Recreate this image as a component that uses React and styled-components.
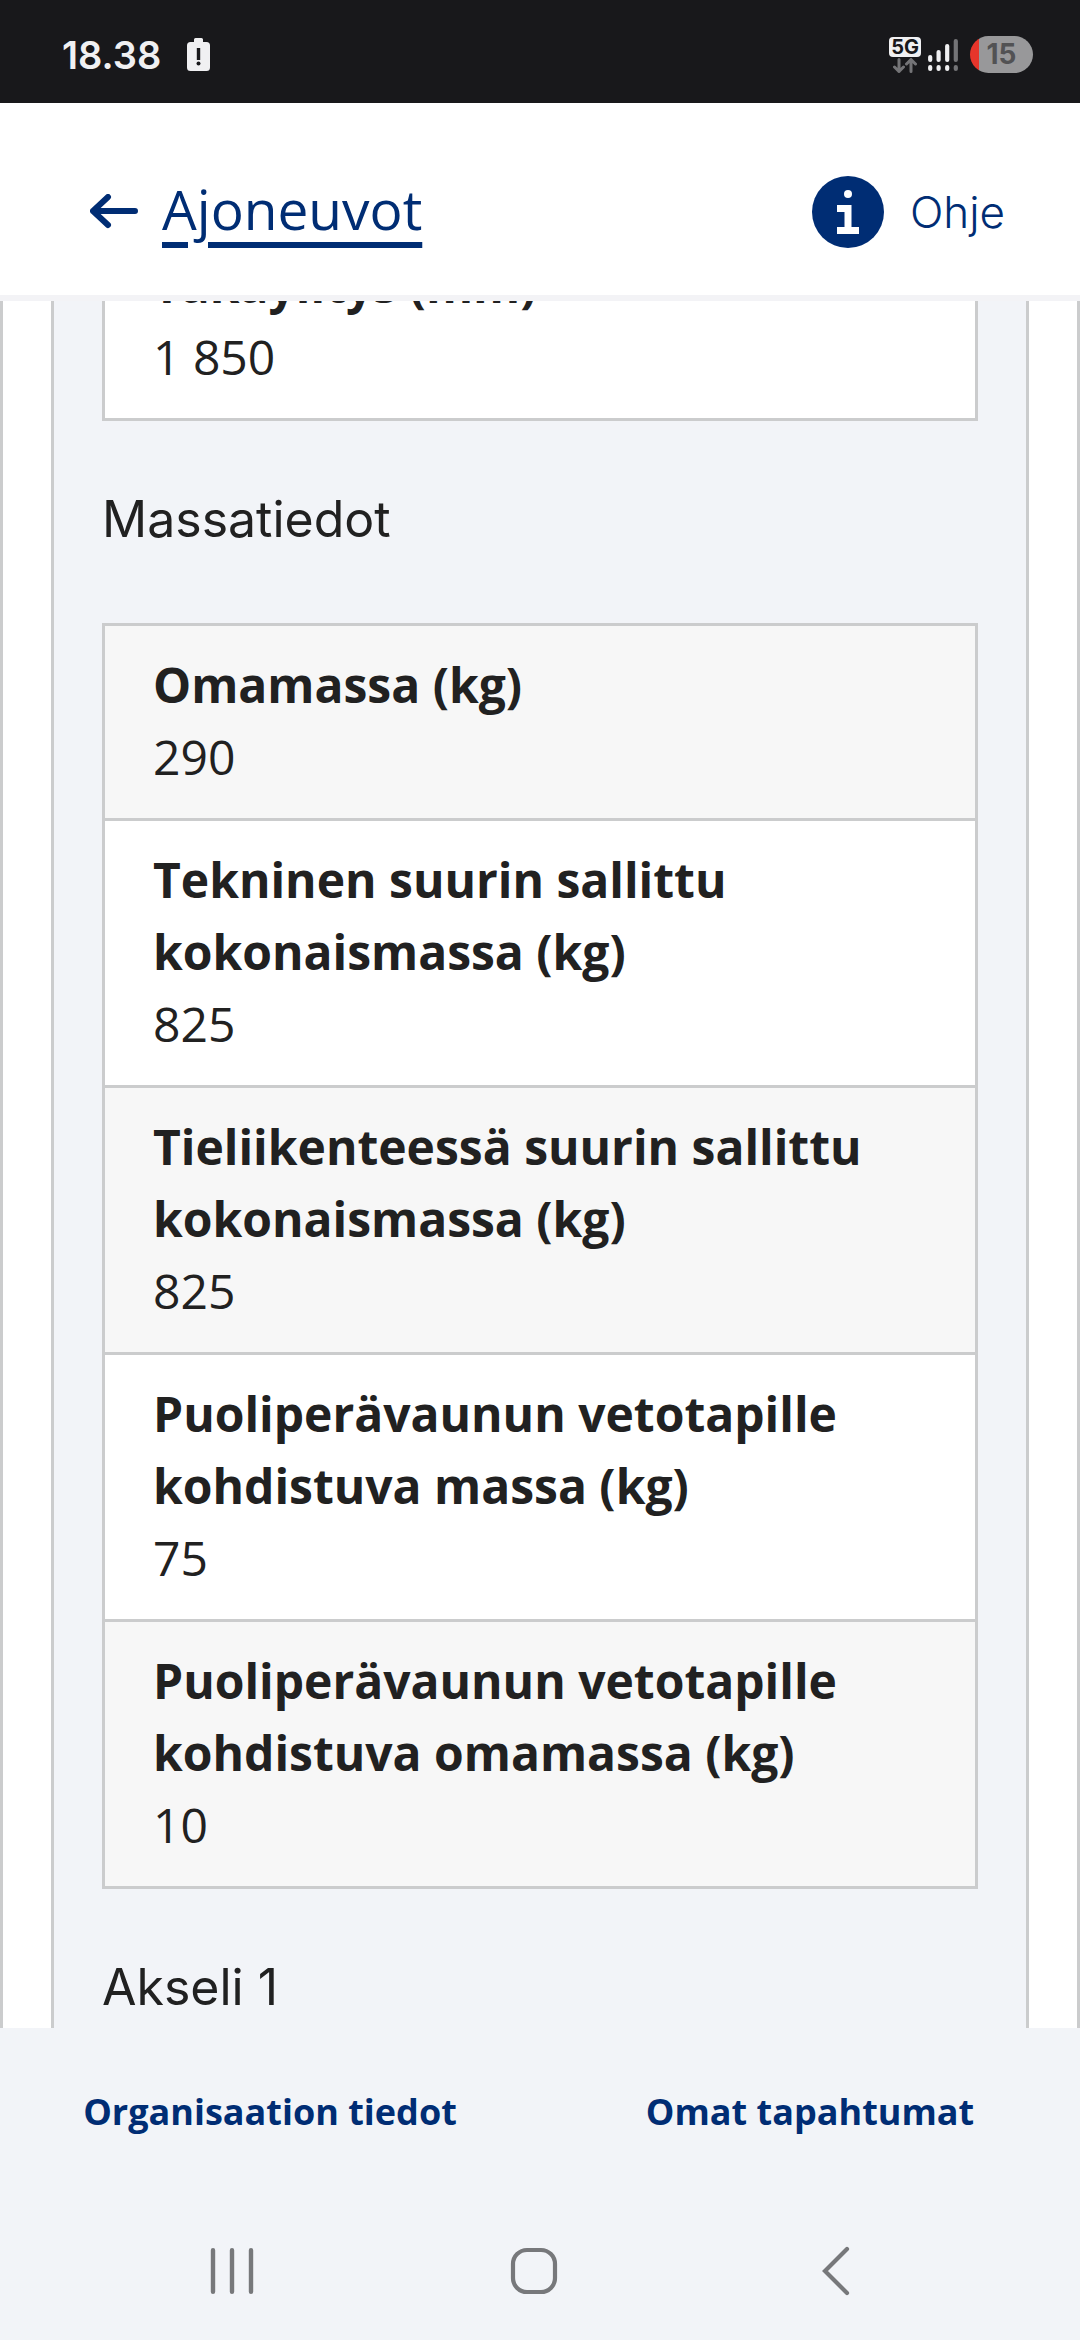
import React, { useLayoutEffect, useRef } from 'react';
import styled, { createGlobalStyle } from 'styled-components';

const navy = '#002d74';
const line = '#cbcccd';
const panel = '#f2f4f8';

const GlobalStyle = createGlobalStyle`
*, *::before, *::after { box-sizing: border-box; }
body {
    margin: 0;
    background: ${panel};
    color: #212121;
    font-family: 'Open Sans', sans-serif;
    font-size: 48px;
    line-height: 72px;
}
`;

const Screen = styled.div`
display: flex;
flex-direction: column;
height: 100vh;
`;

const StatusBar = styled.div`
display: flex;
flex: none;
align-items: center;
gap: 26px;
padding: 6px 47px 0 62px;
height: 103px;
background: #18181b;
color: #f0f0f2;
font-family: 'Inter', sans-serif;
`;

const Clock = styled.span`
font-size: 38px;
font-weight: 600;
line-height: 48px;
`;

const StatusIcons = styled.div`
display: flex;
align-items: center;
gap: 7px;
margin-left: auto;
`;

const Network = styled.div`
display: flex;
flex-direction: column;
align-items: center;
gap: 1px;
`;

const NetworkBadge = styled.span`
padding: 0 2px;
border-radius: 4px;
background: #f0f0f2;
color: #18181b;
font-size: 20px;
font-weight: 700;
line-height: 20px;
`;

const Signal = styled.svg`
margin-right: 5px;
`;

const BatteryPill = styled.span`
width: 63px;
height: 37px;
border-radius: 19px;
background: linear-gradient(to right, #e6352b 9px, #98989a 9px);
color: #525254;
font-size: 28px;
font-weight: 700;
line-height: 37px;
text-align: center;
`;

const Header = styled.header`
display: flex;
flex: none;
align-items: center;
justify-content: space-between;
height: 198px;
padding: 26px 75px 0 90px;
border-bottom: 6px solid #f3f3f6;
background: #fff;
color: ${navy};
`;

const BackLink = styled.a`
display: flex;
align-items: center;
gap: 24px;
color: inherit;
text-decoration: none;
`;

const BackText = styled.span`
padding-bottom: 6px;
font-size: 55px;
text-decoration: underline;
text-decoration-thickness: 6px;
text-underline-offset: 12px;
`;

const HelpButton = styled.button`
display: flex;
align-items: center;
gap: 26px;
padding: 0;
border: 0;
background: none;
color: inherit;
font-family: 'Inter', sans-serif;
font-size: 44px;
font-weight: 300;
line-height: 72px;
`;

const Scroller = styled.main`
flex: 1;
min-height: 0;
overflow-y: auto;
scrollbar-width: none;
border: 0 solid ${line};
border-width: 0 3px;
padding: 0 48px;
background: #fff;
`;

const Panel = styled.div`
border: 0 solid ${line};
border-width: 0 3px;
padding: 0 48px 200px;
background: ${panel};
`;

const SectionTitle = styled.h2`
margin: 62px 0 68px;
font-family: 'Inter', sans-serif;
font-size: 50px;
font-weight: 400;
line-height: 72px;
`;

const DataList = styled.dl`
margin: 0;
border: 3px solid ${line};
`;

const DataRow = styled.div`
padding: 23px 48px 25px;
background: ${props => (props.$shaded ? '#f7f7f7' : '#fff')};

& + & {
    border-top: 3px solid ${line};
}
`;

const Term = styled.dt`
font-weight: 700;
`;

const Value = styled.dd`
margin: 0;
`;

const LinkBar = styled.nav`
display: grid;
flex: none;
grid-template-columns: 1fr 1fr;
height: 172px;
padding-top: 57px;
background: ${panel};
`;

const BarLink = styled.a`
color: ${navy};
font-size: 36px;
font-weight: 700;
line-height: 54px;
text-align: center;
text-decoration: none;
`;

const SystemNav = styled.div`
display: grid;
flex: none;
grid-template-columns: repeat(3, 1fr);
height: 140px;
padding: 0 93px 0 81px;
background: ${panel};
`;

const NavButton = styled.button`
display: flex;
align-items: center;
justify-content: center;
padding: 2px 0 0;
border: 0;
background: none;
color: #77787b;
`;

const dimensions = [
    { label: 'Takaylitys (mm)', value: '1 850' },
];

const masses = [
    { label: 'Omamassa (kg)', value: '290' },
    { label: 'Tekninen suurin sallittu kokonaismassa (kg)', value: '825' },
    { label: 'Tieliikenteessä suurin sallittu kokonaismassa (kg)', value: '825' },
    { label: 'Puoliperävaunun vetotapille kohdistuva massa (kg)', value: '75' },
    { label: 'Puoliperävaunun vetotapille kohdistuva omamassa (kg)', value: '10' },
];

const BatteryAlert = () => (
    <svg width="23" height="33" viewBox="0 0 23 33" aria-hidden="true">
        <path d="M7 1.5Q7 0 8.500 0h6Q16 0 16 1.500V4h3.500Q23 4 23 7.500v22Q23 33 19.500 33h-16Q0 33 0 29.500v-22Q0 4 3.500 4H7z" fill="#f0f0f2" />
        <path d="M9.800 10h3.400v12H9.800z" fill="#18181b" />
        <circle cx="11.500" cy="25.500" r="2" fill="#18181b" />
    </svg>
);

const DataArrows = () => (
    <svg width="24" height="15" viewBox="0 0 24 15" fill="none" stroke="#747477" strokeWidth="3" strokeLinecap="round" strokeLinejoin="round" aria-hidden="true">
        <path d="M6 1.500v12M1.500 9 6 13.500 10.500 9M18 13.500v-12M13.500 6 18 1.500 22.500 6" />
    </svg>
);

const SignalBars = () => (
    <Signal width="30" height="34" viewBox="0 0 30 34" strokeWidth="4.200" strokeLinecap="round" aria-hidden="true">
        <path d="M2.200 19v3M10.600 14v8M19.200 8v14M2.200 29v2M10.600 29v2M19.200 29v2" stroke="#f0f0f2" />
        <path d="M27.800 3v19M27.800 29v2" stroke="#747477" />
    </Signal>
);

const BackArrow = () => (
    <svg width="48" height="36" viewBox="0 0 48 36" fill="none" stroke="currentColor" strokeWidth="6" strokeLinecap="round" strokeLinejoin="round" aria-hidden="true">
        <path d="M45 17H3M18 3 3 17 18 31" />
    </svg>
);

const InfoIcon = () => (
    <svg width="72" height="72" viewBox="0 0 72 72" aria-hidden="true">
        <circle cx="36" cy="36" r="36" fill={navy} />
        <circle cx="36" cy="18" r="4" fill="#fff" />
        <path d="M25 29h14.500v22H47v7H25v-7h7.500V36H25z" fill="#fff" />
    </svg>
);

const DataTable = ({ rows, startShaded }) => (
    <DataList>
        {rows.map((row, i) => (
            <DataRow key={row.label} $shaded={startShaded ? i % 2 === 0 : i % 2 === 1}>
                <Term>{row.label}</Term>
                <Value>{row.value}</Value>
            </DataRow>
        ))}
    </DataList>
);

const App = () => {
    const scroller = useRef(null);

    useLayoutEffect(() => {
        scroller.current.scrollTop = 78;
    }, []);

    return (
        <Screen>
            <GlobalStyle />
            <StatusBar>
                <Clock>18.38</Clock>
                <BatteryAlert />
                <StatusIcons>
                    <Network>
                        <NetworkBadge>5G</NetworkBadge>
                        <DataArrows />
                    </Network>
                    <SignalBars />
                    <BatteryPill>15</BatteryPill>
                </StatusIcons>
            </StatusBar>

            <Header>
                <BackLink href="#ajoneuvot">
                    <BackArrow />
                    <BackText>Ajoneuvot</BackText>
                </BackLink>
                <HelpButton type="button">
                    <InfoIcon />
                    Ohje
                </HelpButton>
            </Header>

            <Scroller ref={scroller}>
                <Panel>
                    <DataTable rows={dimensions} />
                    <SectionTitle>Massatiedot</SectionTitle>
                    <DataTable rows={masses} startShaded />
                    <SectionTitle>Akseli 1</SectionTitle>
                </Panel>
            </Scroller>

            <LinkBar>
                <BarLink href="#organisaatio">Organisaation tiedot</BarLink>
                <BarLink href="#tapahtumat">Omat tapahtumat</BarLink>
            </LinkBar>

            <SystemNav>
                <NavButton type="button" aria-label="Viimeisimmät">
                    <svg width="44" height="48" viewBox="0 0 44 48" stroke="currentColor" strokeWidth="4.400" strokeLinecap="round">
                        <path d="M3 3.200v41.600M22 3.200v41.600M41 3.200v41.600" />
                    </svg>
                </NavButton>
                <NavButton type="button" aria-label="Koti">
                    <svg width="48" height="48" viewBox="0 0 48 48" fill="none" stroke="currentColor" strokeWidth="4.200">
                        <rect x="3" y="3" width="42" height="42" rx="14" />
                    </svg>
                </NavButton>
                <NavButton type="button" aria-label="Takaisin">
                    <svg width="28" height="50" viewBox="0 0 28 50" fill="none" stroke="currentColor" strokeWidth="4.200" strokeLinecap="round">
                        <path d="M25 3 3 25l22 22" />
                    </svg>
                </NavButton>
            </SystemNav>
        </Screen>
    );
};

export default App;
